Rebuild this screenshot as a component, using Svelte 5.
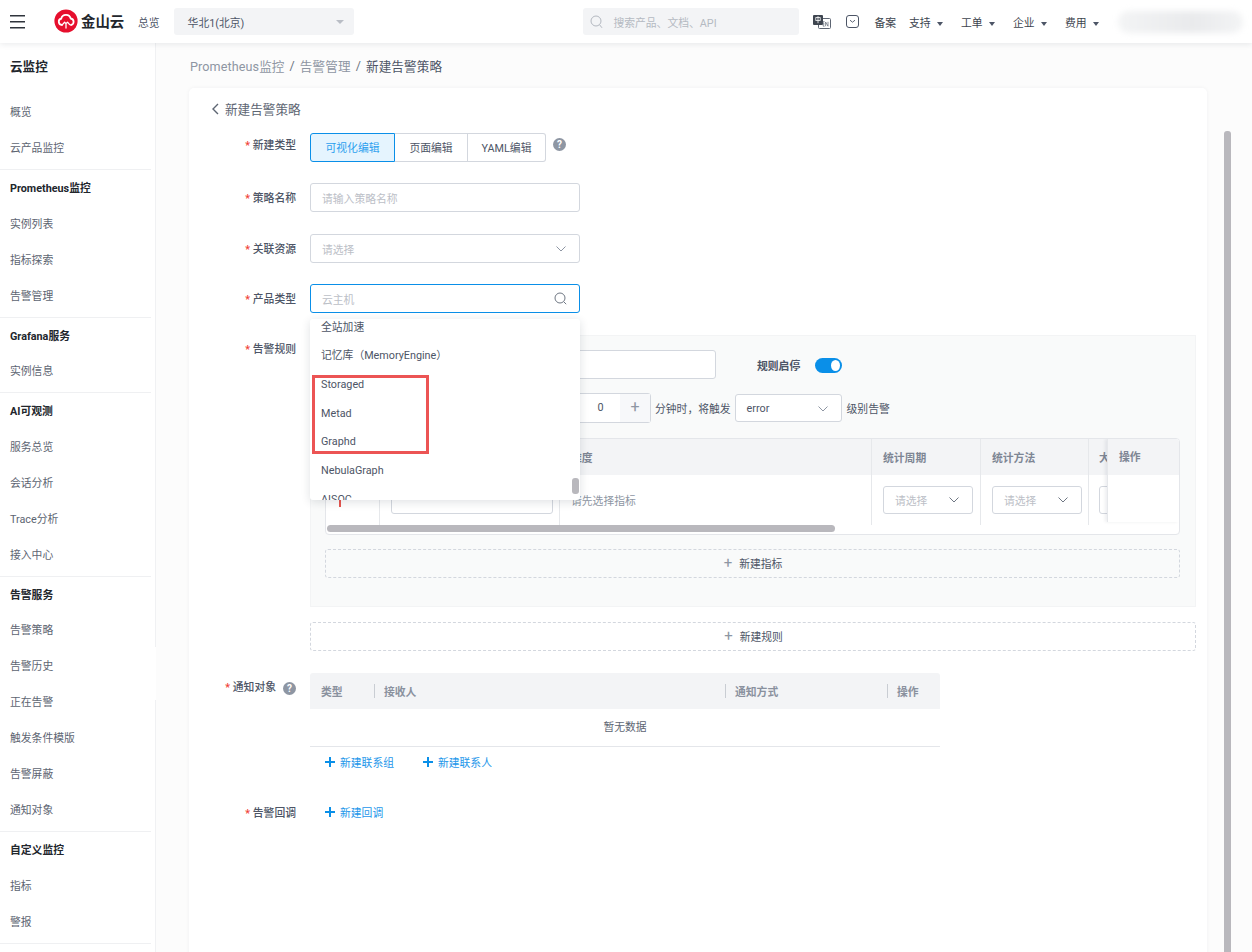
<script>
  const groups = [
    { head: 'Prometheus监控', items: ['实例列表', '指标探索', '告警管理'] },
    { head: 'Grafana服务', items: ['实例信息'], short: true },
    { head: 'AI可观测', items: ['服务总览', '会话分析', 'Trace分析', '接入中心'] },
    { head: '告警服务', items: ['告警策略', '告警历史', '正在告警', '触发条件模版', '告警屏蔽', '通知对象'], short: true },
    { head: '自定义监控', items: ['指标', '警报'] }
  ];
  const nav = ['支持', '工单', '企业', '费用'];
  const options = ['全站加速', '记忆库（MemoryEngine）', 'Storaged', 'Metad', 'Graphd', 'NebulaGraph', 'AISOC'];
</script>

<div class="page">
  <header class="top">
    <button class="burger" aria-label="菜单"><span></span><span></span><span></span></button>
    <div class="logo">
      <svg width="24" height="24" viewBox="0 0 24 24">
        <circle cx="12" cy="12" r="11.6" fill="#e60f2d"/>
        <path d="M8 16a3.2 3.2 0 0 1-.8-6.3 4.9 4.9 0 0 1 9.5-.2 3.3 3.3 0 0 1 .3 6.5" fill="none" stroke="#fff" stroke-width="1.8" stroke-linecap="round"/>
        <path d="M8.4 15.6l2.2-2.4 1.4 1.4 1.5-1.5 2.2 2.5M12 15v4" fill="none" stroke="#fff" stroke-width="1.3" stroke-linecap="round" stroke-linejoin="round"/>
      </svg>
      <span>金山云</span>
    </div>
    <span class="overview">总览</span>
    <div class="region"><span>华北1(北京)</span><i class="caret light"></i></div>
    <div class="grow"></div>
    <div class="search">
      <svg width="13" height="14" viewBox="0 0 13 14" fill="none" stroke="#b3b8c0" stroke-width="1"><circle cx="6" cy="6" r="5"/><path d="M9.6 9.8l2.4 3"/></svg>
      <span>搜索产品、文档、API</span>
    </div>
    <svg class="lang" width="18" height="14" viewBox="0 0 18 14">
      <rect x="5.5" y="3.5" width="12" height="10" rx="1" fill="#fff" stroke="#5d6572"/>
      <rect x="0" y="0" width="10" height="10" rx="1" fill="#3f4650"/>
      <rect x="2.8" y="2.6" width="4.4" height="2.8" fill="none" stroke="#fff" stroke-width=".8"/><path d="M5 1.2v7" stroke="#fff" stroke-width=".8"/>
      <path d="M11.6 6.6h-1.4v4.6h1.4M10.2 8.9h1.3M12.6 11.2V7l2.4 4.2V6.8" fill="none" stroke="#5d6572" stroke-width=".7"/>
    </svg>
    <svg class="mail" width="13" height="13" viewBox="0 0 13 13" fill="none" stroke="#4d5566"><rect x=".5" y=".5" width="12" height="12" rx="2.5"/><path d="M4 5.2l2.5 2 2.5-2" stroke-width=".9"/></svg>
    <span class="nav-link record">备案</span>
    {#each nav as n}
      <span class="nav-link drop">{n}<i class="caret"></i></span>
    {/each}
    <div class="blurred"></div>
  </header>

  <div class="body">
    <aside class="side">
      <div class="side-title">云监控</div>
      <div class="group first">
        <div class="item">概览</div>
        <div class="item">云产品监控</div>
      </div>
      {#each groups as g}
        <div class="group">
          <div class="head" class:short={g.short}>{g.head}</div>
          {#each g.items as it}
            <div class="item">{it}</div>
          {/each}
        </div>
      {/each}
      <div class="rule-end"></div>
    </aside>
    <div class="collapse"><i></i></div>

    <main class="main">
      <div class="crumbs">
        <span>Prometheus监控</span><em>/</em><span>告警管理</span><em>/</em><b>新建告警策略</b>
      </div>
      <section class="card">
        <div class="back">
          <svg width="8" height="12" viewBox="0 0 8 12" fill="none" stroke="#5d6572" stroke-width="1.4"><path d="M7 1L2 6l5 5"/></svg>
          <span>新建告警策略</span>
        </div>

        <div class="row">
          <label class="lab up">新建类型</label>
          <div class="seg">
            <span class="on s1">可视化编辑</span><span class="s2">页面编辑</span><span class="s3">YAML编辑</span>
          </div>
          <span class="help seg-help">?</span>
        </div>
        <div class="row tight">
          <label class="lab">策略名称</label>
          <div class="field w270"><span class="ph">请输入策略名称</span></div>
        </div>
        <div class="row">
          <label class="lab">关联资源</label>
          <div class="field w270"><span class="ph">请选择</span>
            <svg class="chev" width="10" height="6" viewBox="0 0 10 6" fill="none" stroke="#8e96a3"><path d="M.5.5L5 5 9.5.5"/></svg>
          </div>
        </div>
        <div class="row tight">
          <label class="lab">产品类型</label>
          <div class="field w270 focus"><span class="ph">云主机</span>
            <svg class="mag" width="13" height="13" viewBox="0 0 13 13" fill="none" stroke="#6f7783"><circle cx="6" cy="6" r="5"/><path d="M9.8 9.8l2.4 2.4"/></svg>
          </div>
          <div class="dropdown">
            <div class="opts">
              {#each options as o}<div class="opt">{o}</div>{/each}
            </div>
            <div class="thumb"></div>
            <div class="mark"></div>
          </div>
        </div>

        <div class="row rules-row">
          <label class="lab first-lab">告警规则</label>
          <div class="rulebox">
            <div class="rb-top">
              <div class="field rule-name"></div>
              <span class="rb-label">规则启停</span>
              <span class="toggle"><i></i></span>
            </div>
            <div class="rb-cond">
              <div class="stepper"><span class="val">0</span><span class="plus">+</span></div>
              <span class="cond-a">分钟时，将触发</span>
              <div class="field level"><span class="lv">error</span>
                <svg class="chev" width="10" height="6" viewBox="0 0 10 6" fill="none" stroke="#8e96a3"><path d="M.5.5L5 5 9.5.5"/></svg>
              </div>
              <span class="cond-b">级别告警</span>
            </div>
            <div class="tbl">
              <div class="tr th">
                <div class="c c1"></div><div class="c c2"></div><div class="c c3">维度</div>
                <div class="c c4">统计周期</div><div class="c c5">统计方法</div><div class="c c6">大</div>
              </div>
              <div class="tr td">
                <div class="c c1"><i class="red"></i></div>
                <div class="c c2"><div class="field mini wide"></div></div>
                <div class="c c3"><span class="ph dark">请先选择指标</span></div>
                <div class="c c4"><div class="field mini"><span class="ph">请选择</span><svg class="chev" width="10" height="6" viewBox="0 0 10 6" fill="none" stroke="#6f7783"><path d="M.5.5L5 5 9.5.5"/></svg></div></div>
                <div class="c c5"><div class="field mini"><span class="ph">请选择</span><svg class="chev" width="10" height="6" viewBox="0 0 10 6" fill="none" stroke="#6f7783"><path d="M.5.5L5 5 9.5.5"/></svg></div></div>
                <div class="c c6"><div class="field mini clip"></div></div>
              </div>
              <div class="fixed">
                <div class="fh">操作</div>
              </div>
              <div class="hbar"><i></i></div>
            </div>
            <div class="dashed metric"><span class="pl">+</span><span class="dt">新建指标</span></div>
          </div>
        </div>

        <div class="row newrule">
          <span class="lab"></span>
          <div class="dashed wide-dash"><span class="pl">+</span><span class="dt">新建规则</span></div>
        </div>

        <div class="row notify">
          <label class="lab first-lab">通知对象<span class="help nh">?</span></label>
          <div class="ntbl">
            <div class="nh-row">
              <span class="n1">类型</span><span class="n2">接收人</span><span class="n3">通知方式</span><span class="n4">操作</span>
            </div>
            <div class="empty">暂无数据</div>
            <div class="links">
              <span class="link"><i class="bp"></i>新建联系组</span>
              <span class="link"><i class="bp"></i>新建联系人</span>
            </div>
          </div>
        </div>

        <div class="row cb">
          <label class="lab">告警回调</label>
          <span class="link"><i class="bp"></i>新建回调</span>
        </div>
      </section>
      <div class="vbar"></div>
    </main>
  </div>
</div>

<style>
  :global(body) { margin: 0; background: #fff; }
  .page {
    width: 1252px; height: 952px; overflow: hidden; position: relative;
    font-family: "Roboto", "Noto Sans CJK SC", sans-serif; font-size: 10.8px; color: #4d5566;
    display: flex; flex-direction: column;
  }
  .top {
    height: 43px; flex: none; display: flex; align-items: center; background: #fff;
    box-shadow: 0 1px 6px rgba(30, 40, 60, .1); position: relative; z-index: 5;
  }
  .burger { width: 15px; height: 13px; margin-left: 10px; padding: 0; border: 0; background: none; display: flex; flex-direction: column; justify-content: space-between; }
  .burger span { display: block; height: 1px; background: #2f343c; box-shadow: 0 .5px 0 #2f343c; }
  .logo { display: flex; align-items: center; margin-left: 29px; margin-top: -2px; }
  .logo span { margin-left: 3px; font-size: 14.4px; font-weight: 700; color: #22262c; width: 44px; white-space: nowrap; }
  .overview { margin-left: 13px; }
  .region { margin-left: 14px; width: 180px; height: 27px; box-sizing: border-box; padding: 0 10px 0 14px; background: #f3f4f6; border-radius: 3px; display: flex; align-items: center; justify-content: space-between; }
  .grow { flex: 1; }
  .caret { display: inline-block; width: 0; height: 0; border: 3px solid transparent; border-top: 4px solid #4d5566; border-bottom: 0; margin-left: 6px; vertical-align: middle; }
  .caret.light { border-top-color: #b9bdc5; border-left-width: 4px; border-right-width: 4px; margin-left: 0; }
  .search { width: 216px; height: 27px; box-sizing: border-box; background: #f3f4f6; border-radius: 3px; display: flex; align-items: center; padding-left: 7px; color: #b5bac2; }
  .search span { margin-left: 10px; }
  .lang { margin-left: 14px; }
  .mail { margin-left: 15px; }
  .nav-link { color: #3d444e; white-space: nowrap; }
  .record { margin-left: 15px; }
  .drop { margin-left: 13px; width: 39px; display: inline-block; }
  .blurred { width: 125px; height: 22px; margin-left: 14px; margin-right: 9px; background: linear-gradient(90deg, #f3f4f5, #e9eaec 60%, #f3f4f5); border-radius: 12px; filter: blur(3px); }

  .body { flex: 1; display: flex; min-height: 0; position: relative; }
  .side { width: 156px; flex: none; box-sizing: border-box; border-right: 1px solid #f0f1f3; background: #fff; }
  .side-title { height: 46px; line-height: 48px; padding-left: 10px; font-size: 12.6px; font-weight: 700; color: #22262c; margin-bottom: 4px; }
  .group { border-top: 1px solid #eff0f2; margin-right: 4px; padding-bottom: 4px; }
  .group.first { border-top: 0; }
  .head { height: 35px; line-height: 38px; padding-left: 10px; font-weight: 700; color: #22262c; }
  .head.short { height: 34px; line-height: 37px; }
  .item { height: 36px; line-height: 40px; padding-left: 10px; color: #5d6572; }
  .rule-end { border-top: 1px solid #eff0f2; margin-right: 4px; }
  .collapse { position: absolute; left: 155px; top: 603px; width: 12px; height: 53px; background: #fff; border: 1px solid #eff0f2; border-left: 0; border-radius: 0 7px 7px 0; display: flex; align-items: center; }
  .collapse i { width: 0; height: 0; border: 5px solid transparent; border-right: 6px solid #6f7783; border-left: 0; margin-left: 2px; }

  .main { flex: 1; background: #fcfcfc; padding: 0 45px 0 33px; position: relative; min-width: 0; }
  .crumbs { height: 45px; display: flex; align-items: center; font-size: 12.6px; color: #8e96a3; padding-left: 1px; letter-spacing: .1px; }
  .crumbs em { font-style: normal; margin: 0 5px; color: #6f7783; }
  .crumbs b { font-weight: 400; color: #4d5566; }
  .card { background: #fff; border-radius: 5px; box-shadow: 0 0 4px rgba(30, 40, 60, .05); height: 900px; box-sizing: border-box; }
  .back { height: 41px; margin-bottom: 4px; display: flex; align-items: center; padding-left: 22px; font-size: 12.6px; color: #5d6572; }
  .back span { margin-left: 6px; }

  .row { display: flex; margin-bottom: 21px; position: relative; }
  .row.tight { margin-bottom: 22px; }
  .lab { width: 107px; height: 29px; align-self: flex-start; flex: none; box-sizing: border-box; margin-right: 14px; text-align: right; line-height: 31px; font-weight: 500; color: #4d5566; }
  .lab:not(:empty)::before { content: "* "; color: #f04134; }
  .lab.up { line-height: 25px; }
  .first-lab { line-height: 29px; }
  .seg { display: flex; height: 29px; }
  .seg span { box-sizing: border-box; height: 29px; padding-bottom: 1px; display: flex; align-items: center; justify-content: center; border: 1px solid #d3d7de; border-left: 0; }
  .s1 { width: 85px; }
  .s2 { width: 73px; }
  .s3 { width: 78px; border-radius: 0 3px 3px 0; }
  .seg .on { border: 1px solid #0a8fe8; background: #e5f4fe; color: #2b9fee; border-radius: 3px 0 0 3px; }
  .help { width: 13px; height: 13px; border-radius: 50%; background: #8e96a3; color: #fff; font-size: 10px; font-weight: 700; line-height: 13px; text-align: center; display: inline-block; }
  .seg-help { margin: 5px 0 0 7px; }
  .lab .nh { margin-left: 7px; vertical-align: -1px; }
  .field { box-sizing: border-box; height: 29px; border: 1px solid #d3d7de; border-radius: 3px; background: #fff; display: flex; align-items: center; padding: 0 11px; position: relative; }
  .w270 { width: 270px; }
  .focus { border-color: #0a8fe8; }
  .ph { color: #bcc0c7; white-space: nowrap; }
  .ph.dark { color: #8e96a3; }
  .chev { position: absolute; right: 13px; top: 11px; }
  .mag { position: absolute; right: 12px; top: 7px; }

  .dropdown { position: absolute; left: 121px; top: 35px; width: 270px; height: 181px; background: #fff; z-index: 3; border-radius: 3px; box-shadow: 0 2px 10px rgba(30, 40, 60, .14); overflow: hidden; }
  .opts { margin-top: -5.5px; }
  .opt { height: 28.7px; line-height: 28.7px; padding-left: 11px; color: #4d5566; white-space: nowrap; }
  .thumb { position: absolute; right: 1px; top: 159px; width: 7px; height: 16px; border-radius: 3px; background: #b9b8bd; }
  .mark { position: absolute; left: 2px; top: 56px; width: 117px; height: 79px; box-sizing: border-box; border: 3px solid #ec5454; }

  .rules-row { margin-bottom: 15px; }
  .rulebox { width: 886px; height: 272px; box-sizing: border-box; background: #f9fafa; border: 1px solid #f3f4f5; padding: 14px 15px 0 14px; }
  .rb-top { display: flex; align-items: center; height: 29px; }
  .rule-name { width: 316px; margin-left: 75px; }
  .rb-label { margin-left: 41px; font-weight: 700; color: #4d5566; }
  .toggle { margin-left: 15px; width: 27px; height: 15px; border-radius: 8px; background: #0a8fe8; position: relative; margin-top: 2px; }
  .toggle i { position: absolute; right: 2px; top: 2px; width: 9px; height: 11px; border-radius: 50%; background: #fff; }
  .rb-cond { display: flex; align-items: center; height: 30px; margin-top: 14px; margin-left: 205px; }
  .stepper { width: 121px; height: 30px; box-sizing: border-box; border: 1px solid #d3d7de; border-radius: 0 3px 3px 0; background: #fff; display: flex; }
  .val { flex: 1; text-align: center; line-height: 28px; padding-left: 50px; }
  .plus { width: 30px; background: #f7f8fa; text-align: center; line-height: 26px; font-size: 16px; color: #8e96a3; }
  .cond-a { margin-left: 4px; white-space: nowrap; }
  .level { width: 107px; height: 28px; margin-left: 4px; }
  .lv { color: #4d5566; }
  .cond-b { margin-left: 5px; }

  .tbl { height: 97px; margin-top: 15px; box-sizing: border-box; border: 1px solid #e4e6ea; border-radius: 4px; background: #fff; position: relative; overflow: hidden; }
  .tr { display: flex; }
  .th { height: 36px; background: #f3f4f6; font-weight: 700; color: #7e8694; }
  .td { height: 50px; }
  .c { box-sizing: border-box; border-right: 1px solid #e6e8eb; padding-left: 11px; display: flex; align-items: center; overflow: hidden; white-space: nowrap; }
  .c1 { width: 54px; }
  .c2 { width: 180px; }
  .c3 { width: 312px; }
  .c4 { width: 109px; }
  .c5 { width: 108px; }
  .c6 { width: 19px; border-right: 0; padding-left: 10px; }
  .red { display: block; width: 2px; height: 7px; background: #e8564f; margin-left: 2px; margin-top: 6px; }
  .mini { width: 90px; height: 28px; padding: 0 11px; flex: none; }
  .mini.wide { width: 162px; margin-left: 0; }
  .mini.clip { width: 40px; }
  .mini .chev { right: 13px; top: 10px; }
  .fixed { position: absolute; left: 781px; top: 0; right: 0; bottom: 12px; background: #fff; box-shadow: -2px 0 3px rgba(30, 40, 60, .08); border-left: 1px solid #e6e8eb; }
  .fh { height: 36px; line-height: 37px; padding-left: 11px; background: #f3f4f6; font-weight: 700; color: #7e8694; }
  .hbar { position: absolute; left: 1px; right: 0; bottom: 1px; height: 8px; }
  .hbar i { display: block; width: 508px; height: 7px; border-radius: 4px; background: #b9b8bd; }

  .dashed { box-sizing: border-box; height: 29px; padding-bottom: 2px; border: 1px dashed #d3d7de; border-radius: 3px; display: flex; align-items: center; justify-content: center; color: #4d5566; background: #fff; }
  .metric { margin-top: 14px; background: transparent; }
  .wide-dash { width: 886px; }
  .pl { font-size: 15px; color: #8e96a3; margin-right: 7px; line-height: 1; position: relative; top: 1px; left: 1px; }
  .dt { margin-left: 1px; }

  .ntbl { width: 630px; }
  .nh-row { height: 36px; background: #f3f4f6; border-radius: 3px 3px 0 0; display: flex; align-items: center; font-weight: 700; color: #8a919e; }
  .nh-row span { box-sizing: border-box; padding-left: 10px; position: relative; }
  .nh-row span + span::before { content: ""; position: absolute; left: 0; top: 1px; bottom: 1px; border-left: 1px solid #c9cdd3; }
  .n1 { width: 64px; padding-left: 11px !important; }
  .n2 { width: 351px; }
  .n3 { width: 162px; }
  .n4 { width: 53px; }
  .empty { height: 37px; line-height: 37px; text-align: center; color: #5d6572; border-bottom: 1px solid #e4e6ea; }
  .links { height: 30px; display: flex; align-items: center; padding-left: 15px; }
  .links .link + .link { margin-left: 29px; }
  .link { display: inline-flex; align-items: center; color: #1c96ea; white-space: nowrap; }
  .bp { width: 10px; height: 10px; margin-right: 5px; position: relative; display: inline-block; background: linear-gradient(#0a8fe8, #0a8fe8) center / 10px 2px no-repeat, linear-gradient(#0a8fe8, #0a8fe8) center / 2px 10px no-repeat; }
  .notify { margin-bottom: 21px; }
  .newrule { margin-bottom: 22px; }
  .cb { align-items: center; }
  .cb .link { margin-left: 15px; margin-top: -1px; }
  .vbar { position: absolute; left: 1068px; top: 88px; bottom: 0; width: 7px; background: #b9b8bd; border-radius: 3px 3px 0 0; }
</style>
